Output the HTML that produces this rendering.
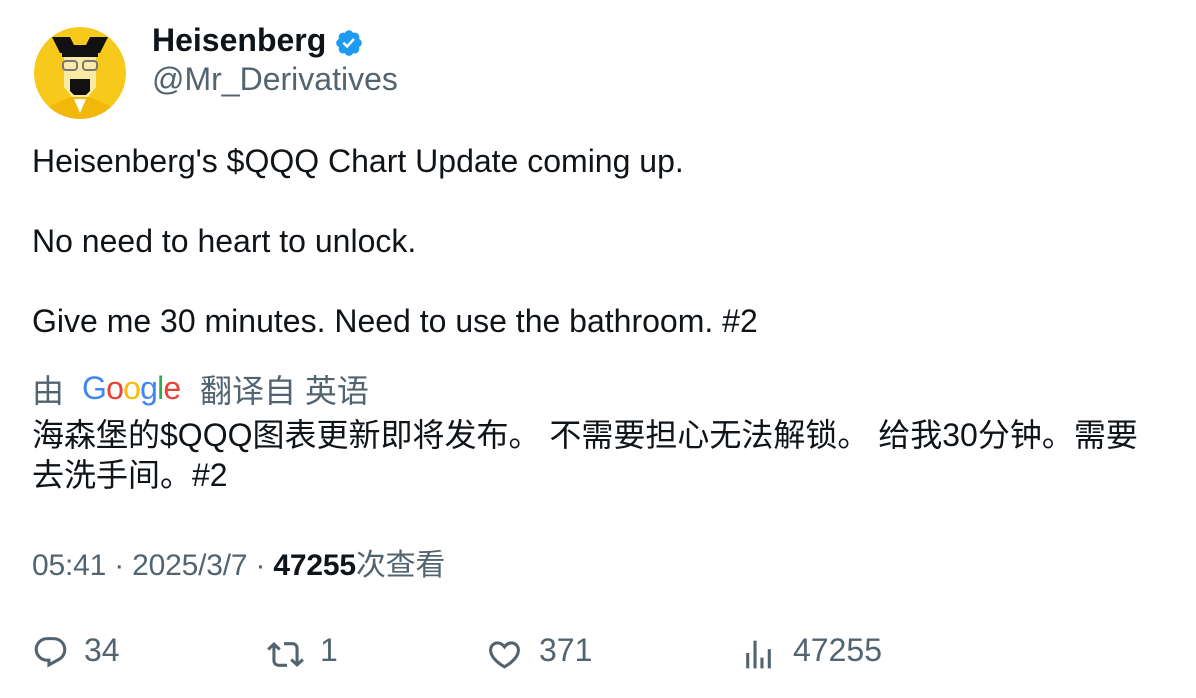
<!DOCTYPE html>
<html><head><meta charset="utf-8"><style>
body{margin:0;width:1196px;height:698px;background:#fff;font-family:"Liberation Sans","Noto Sans CJK SC",sans-serif;color:#0f1419;position:relative;overflow:hidden}
.a{position:absolute;white-space:nowrap}
.g{color:#536471}
.ic{position:absolute;width:37px;height:37px;fill:#536471}
</style></head><body>
<svg class="a" style="left:34px;top:27px" width="92" height="92" viewBox="0 0 92 92">
<defs><clipPath id="c"><circle cx="46" cy="46" r="46"/></clipPath></defs>
<g clip-path="url(#c)">
<circle cx="46" cy="46" r="46" fill="#f6c91a"/>
<path d="M18 10h18l4 8h12l4-8h18l-8 16H26z" fill="#111"/>
<rect x="28" y="24" width="36" height="6" fill="#111"/>
<path d="M30 30h32v30l-8 10H38l-8-10z" fill="#fbe9a6"/>
<rect x="29" y="34" width="14" height="9" rx="3" fill="none" stroke="#777" stroke-width="2"/>
<rect x="49" y="34" width="14" height="9" rx="3" fill="none" stroke="#777" stroke-width="2"/>
<path d="M36 52h20v12l-4 4H40l-4-4z" fill="#111"/>
<path d="M6 84l30-14h20l30 14v10H6z" fill="#f1b80a"/>
<path d="M40 72h12l-6 14z" fill="#fff"/>
</g>
</svg>
<div class="a" style="left:152px;top:22px;font-size:32px;font-weight:bold">Heisenberg</div>
<svg class="a" style="left:334px;top:28px" width="30" height="30" viewBox="0 0 24 24"><path fill="#1d9bf0" d="M22.25 12c0-1.43-.88-2.67-2.19-3.34.46-1.39.2-2.9-.81-3.91s-2.52-1.27-3.91-.81c-.66-1.31-1.91-2.19-3.34-2.19s-2.67.88-3.33 2.19c-1.4-.46-2.91-.2-3.92.81s-1.26 2.52-.8 3.91C2.63 9.33 1.75 10.57 1.75 12s.88 2.67 2.19 3.34c-.46 1.39-.21 2.9.8 3.91s2.52 1.26 3.91.81c.67 1.31 1.91 2.19 3.34 2.19s2.68-.88 3.34-2.19c1.39.45 2.9.2 3.91-.81s1.27-2.52.81-3.91c1.31-.67 2.19-1.91 2.19-3.34zm-11.71 4.2L6.8 12.46l1.41-1.42 2.26 2.26 4.8-5.23 1.47 1.36-6.2 6.77z"/></svg>
<div class="a g" style="left:152px;top:61px;font-size:32px">@Mr_Derivatives</div>
<div class="a" style="left:32px;top:141px;font-size:32px;line-height:40px">Heisenberg's $QQQ Chart Update coming up.<br><br>No need to heart to unlock.<br><br>Give me 30 minutes. Need to use the bathroom. #2</div>
<div class="a g" style="left:32px;top:366px;font-size:32px">由</div>
<div class="a" style="left:82px;top:370px;font-size:32px;letter-spacing:-0.8px"><span style="color:#4285f4">G</span><span style="color:#ea4335">o</span><span style="color:#fbbc05">o</span><span style="color:#4285f4">g</span><span style="color:#34a853">l</span><span style="color:#ea4335">e</span></div>
<div class="a g" style="left:200px;top:366px;font-size:32px">翻译自 英语</div>
<div class="a" style="left:32px;top:415px;font-size:32px;line-height:40px">海森堡的$QQQ图表更新即将发布。 不需要担心无法解锁。 给我30分钟。需要<br>去洗手间。#2</div>
<div class="a g" style="left:32px;top:540px;font-size:30px;letter-spacing:-0.2px">05:41 · 2025/3/7 · <b style="color:#0f1419">47255</b>次查看</div>
<svg class="ic" style="left:32px;top:634px" viewBox="0 0 24 24"><path d="M1.751 10c0-4.42 3.584-8 8.005-8h4.366c4.49 0 8.129 3.64 8.129 8.13 0 2.96-1.607 5.68-4.196 7.11l-8.054 4.46v-3.69h-.067c-4.49.1-8.183-3.51-8.183-8.01zm8.005-6c-3.317 0-6.005 2.69-6.005 6 0 3.37 2.77 6.08 6.138 6.01l.351-.01h1.761v2.3l5.087-2.81c1.951-1.08 3.163-3.13 3.163-5.36 0-3.390-2.744-6.13-6.129-6.13H9.756z"/></svg>
<div class="a g" style="left:84px;top:632px;font-size:32px">34</div>
<svg class="ic" style="left:267px;top:636px" viewBox="0 0 24 24"><path d="M4.5 3.88l4.432 4.14-1.364 1.46L5.5 7.55V16c0 1.1.896 2 2 2H13v2H7.5c-2.209 0-4-1.79-4-4V7.55L1.432 9.48.068 8.02 4.5 3.88zM16.5 6H11V4h5.5c2.209 0 4 1.79 4 4v8.45l2.068-1.93 1.364 1.46-4.432 4.14-4.432-4.14 1.364-1.46 2.068 1.93V8c0-1.1-.896-2-2-2z"/></svg>
<div class="a g" style="left:320px;top:632px;font-size:32px">1</div>
<svg class="ic" style="left:486px;top:636px" viewBox="0 0 24 24"><path d="M16.697 5.5c-1.222-.06-2.679.51-3.89 2.16l-.805 1.09-.806-1.09C9.984 6.01 8.526 5.44 7.304 5.5c-1.243.07-2.349.78-2.91 1.91-.552 1.12-.633 2.78.479 4.82 1.074 1.97 3.257 4.27 7.129 6.61 3.87-2.34 6.052-4.64 7.126-6.61 1.111-2.04 1.03-3.7.477-4.82-.561-1.13-1.666-1.84-2.908-1.91zm4.187 7.69c-1.351 2.48-4.001 5.12-8.379 7.67l-.503.3-.504-.3c-4.379-2.55-7.029-5.19-8.382-7.67-1.36-2.5-1.41-4.86-.514-6.67.887-1.79 2.647-2.91 4.601-3.01 1.651-.09 3.368.56 4.798 2.01 1.429-1.45 3.146-2.1 4.796-2.01 1.954.1 3.714 1.22 4.601 3.01.896 1.81.846 4.17-.514 6.67z"/></svg>
<div class="a g" style="left:539px;top:632px;font-size:32px">371</div>
<svg class="ic" style="left:740px;top:636px" viewBox="0 0 24 24"><path d="M8.75 21V3h2v18h-2zM18 21V8.5h2V21h-2zM4 21l.004-10h2L6 21H4zm9.248 0v-7h2v7h-2z"/></svg>
<div class="a g" style="left:793px;top:632px;font-size:32px">47255</div>
</body></html>
